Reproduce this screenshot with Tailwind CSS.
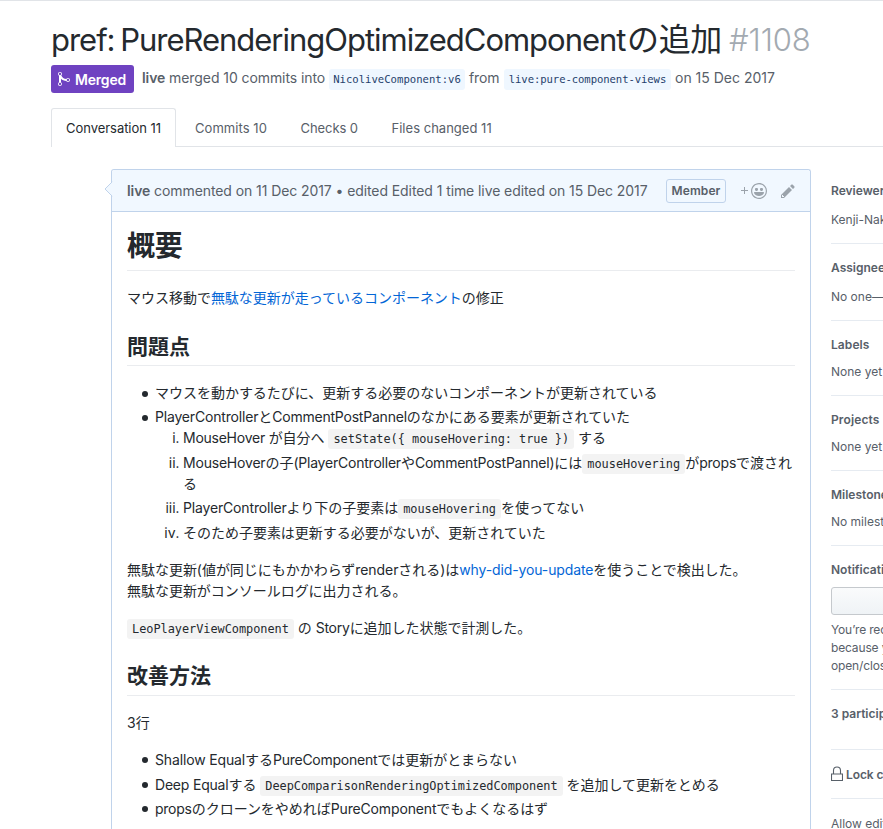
<!DOCTYPE html>
<html lang="ja">
<head>
<meta charset="utf-8">
<title>pref: PureRenderingOptimizedComponentの追加 #1108</title>
<script src="https://cdn.jsdelivr.net/npm/@tailwindcss/browser@4"></script>
</head>
<body class="bg-white font-['Inter','Noto_Sans_CJK_JP',sans-serif] text-[14px] leading-[21px] text-[#24292e]">
<div class="flex h-[829px] w-full flex-col overflow-hidden border-t border-[#e1e4e8]">
  <header class="shrink-0 pt-[20px] pl-[51px]">
    <h1 class="flex h-[36px] text-[32px] leading-[38px] whitespace-nowrap"><span class="w-[576px] text-[31px] tracking-[-1.02px] [word-spacing:-2px]">pref: PureRenderingOptimizedComponent</span><span class="w-[102px] tracking-[-0.34px]">の追加</span><span class="text-[31px] font-[350] tracking-[-0.1px] text-[#a3aab1]">#1108</span></h1>
    <div class="mt-[8px] flex h-[28px] items-center whitespace-nowrap text-[#586069]">
      <span class="flex h-[28px] w-[83px] items-center gap-[5px] rounded-[3px] bg-[#6f42c1] pl-[7px] font-semibold text-white">
        <svg class="h-[16px] w-[12px]" viewBox="0 0 12 16" fill="currentColor"><path d="M10 7c-.73 0-1.38.41-1.73 1.02V8C7.22 7.98 6 7.64 5.14 6.98c-.75-.58-1.5-1.61-1.89-2.44A1.993 1.993 0 0 0 2 .99C.89.99 0 1.89 0 3a2 2 0 0 0 1 1.72v6.56c-.59.35-1 .99-1 1.72 0 1.11.89 2 2 2a1.993 1.993 0 0 0 1-3.72V7.67c.67.7 1.44 1.27 2.3 1.69.86.42 2.03.63 2.97.64v-.02c.36.61 1 1.02 1.73 1.02 1.11 0 2-.89 2-2 0-1.11-.89-2-2-2zm-6.8 6c0 .66-.55 1.2-1.2 1.2-.65 0-1.2-.55-1.2-1.2 0-.65.55-1.2 1.2-1.2.65 0 1.2.55 1.2 1.2zM2 4.2C1.34 4.2.8 3.65.8 3c0-.65.55-1.2 1.2-1.2.65 0 1.2.55 1.2 1.2 0 .65-.55 1.2-1.2 1.2zm8 6c-.66 0-1.2-.55-1.2-1.2 0-.65.55-1.2 1.2-1.2.65 0 1.2.55 1.2 1.2 0 .65-.55 1.2-1.2 1.2z"/></svg>
        <span class="tracking-[-0.2px]">Merged</span>
      </span>
      <span class="ml-[8px] w-[187px] pb-[3px] tracking-[-0.08px]"><b class="font-semibold">live</b> merged 10 commits into</span>
      <code class="mt-px w-[136px] rounded-[3px] bg-[#eff7ff] text-center font-['DejaVu_Sans_Mono',monospace] text-[10.6px] text-[#1f3f6c]">NicoliveComponent:v6</code>
      <span class="ml-[4px] w-[35px] pb-[3px] tracking-[-0.1px]">from</span>
      <code class="mt-px w-[167px] rounded-[3px] bg-[#eff7ff] text-center font-['DejaVu_Sans_Mono',monospace] text-[10.6px] tracking-[-0.08px] text-[#1f3f6c]">live:pure-component-views</code>
      <span class="ml-[4px] pb-[3px]">on 15 Dec 2017</span>
    </div>
  </header>

  <nav class="mt-[15px] flex h-[39px] shrink-0 pl-[51px] text-[13px] whitespace-nowrap text-[#586069] shadow-[inset_0_-1px_0_#e1e4e8]">
    <div class="h-[39px] w-[125px] shrink-0 rounded-t-[3px] border border-b-0 border-[#e1e4e8] bg-white pt-[9px] pl-[14px] text-[#24292e]"><span class="tracking-[-0.04px]">Conversation 11</span></div>
    <div class="flex grow pt-[10px] pl-[19px]">
      <span class="w-[105.5px] tracking-[0.06px]">Commits 10</span>
      <span class="w-[91px] tracking-[-0.07px]">Checks 0</span>
      <span class="tracking-[0.02px]">Files changed 11</span>
    </div>
  </nav>

  <div class="relative mt-[22px] flex min-h-0 grow">
    <div class="absolute -top-[23px] left-0 h-px w-[51px] bg-white"></div>
    <article class="relative ml-[111px] w-[700px] shrink-0 rounded-t-[3px] border border-b-0 border-[#c0d3eb]">
      <div class="flex h-[42px] items-center rounded-t-[3px] border-b border-[#c0d3eb] bg-[#f1f8ff] pl-[15px] whitespace-nowrap text-[#586069]">
        <svg class="absolute top-[11px] -left-[8px] h-[16px] w-[9px]" viewBox="0 0 9 16"><path d="M9 .5L1 8l8 7.5z" fill="#f1f8ff"/><path d="M8.2.8L1 8l7.2 7.2" fill="none" stroke="#c0d3eb"/></svg>
        <span class="w-[539px] tracking-[-0.085px]"><b class="font-semibold">live</b> commented on 11 Dec 2017 • edited Edited 1 time live edited on 15 Dec 2017</span>
        <span class="flex h-[24px] w-[60px] items-center justify-center rounded-[3px] border border-[#c0d3eb] text-[12px] font-semibold tracking-[0.1px]">Member</span>
        <span class="ml-[15px] flex items-center gap-[2px] text-[#9ba3ab]">
          <svg class="h-[8px] w-[8px]" viewBox="0 0 8 8"><path d="M3.5 0v7M0 3.5h7" stroke="currentColor" fill="none"/></svg>
          <svg class="h-[16px] w-[16px]" viewBox="0 0 16 16" fill="currentColor"><path d="M8 0C3.58 0 0 3.58 0 8s3.58 8 8 8 8-3.58 8-8-3.58-8-8-8zm4.81 12.81a6.72 6.72 0 0 1-2.17 1.45c-.83.36-1.72.53-2.64.53-.92 0-1.81-.17-2.64-.53-.81-.34-1.55-.83-2.17-1.45a6.773 6.773 0 0 1-1.45-2.17A6.59 6.59 0 0 1 1.21 8c0-.92.17-1.81.53-2.64.34-.81.83-1.55 1.45-2.17.62-.62 1.36-1.11 2.17-1.45A6.59 6.59 0 0 1 8 1.21c.92 0 1.81.17 2.64.53.81.34 1.55.83 2.17 1.45.62.62 1.11 1.36 1.45 2.17.36.83.53 1.72.53 2.64 0 .92-.17 1.81-.53 2.64-.34.81-.83 1.55-1.45 2.17zM4 6.8v-.59c0-.66.53-1.19 1.2-1.19h.59c.66 0 1.19.53 1.19 1.19v.59c0 .67-.53 1.2-1.19 1.2H5.2C4.53 8 4 7.47 4 6.8zm5 0v-.59c0-.66.53-1.19 1.2-1.19h.59c.66 0 1.19.53 1.19 1.19v.59c0 .67-.53 1.2-1.19 1.2h-.59C9.53 8 9 7.47 9 6.8zm4 3.2c-.72 1.88-2.91 3-5 3s-4.28-1.13-5-3c-.14-.39.23-1 .66-1h8.59c.41 0 .89.61.75 1z"/></svg>
          <svg class="ml-[12px] h-[16px] w-[14px]" viewBox="0 0 14 16" fill="currentColor"><path d="M0 12v3h3l8-8-3-3L0 12zm3 2H1v-2h1v1h1v1zm10.3-9.3L12 6 9 3l1.3-1.3a.996.996 0 0 1 1.41 0l1.59 1.59c.39.39.39 1.02 0 1.41z"/></svg>
        </span>
      </div>
      <div class="p-[15px]">
        <h1 class="mb-[16px] border-b border-[#eaecef] pt-[2px] pb-[6.4px] text-[28px] leading-[35px] font-bold tracking-[-0.2px]">概要</h1>
        <p class="mb-[16px] tracking-[-0.02px]">マウス移動で<a class="text-[#0366d6]">無駄な更新が走っているコンポーネント</a>の修正</p>
        <h2 class="mt-[24px] mb-[16px] border-b border-[#eaecef] pt-[1.3px] pb-[5px] text-[21px] leading-[26.25px] font-bold">問題点</h2>
        <ul class="mb-[16px] pl-[28px] tracking-[-0.02px]">
          <li class="relative before:absolute before:top-[9px] before:-left-[13px] before:size-[6px] before:rounded-full before:bg-[#24292e]">マウスを動かするたびに、更新する必要のないコンポーネントが更新されている</li>
          <li class="relative mt-[3.5px] before:absolute before:top-[9px] before:-left-[13px] before:size-[6px] before:rounded-full before:bg-[#24292e]"><span class="tracking-[-0.18px]">PlayerController</span>と<span class="tracking-[-0.22px]">CommentPostPannel</span>のなかにある要素が更新されていた
            <ol class="list-[lower-roman] pl-[28px]">
              <li><span class="tracking-[-0.25px]">MouseHover </span>が自分へ <code class="rounded-[3px] bg-[#f3f3f3] px-[5px] py-[3px] font-['DejaVu_Sans_Mono',monospace] text-[11.9px] leading-0 tracking-[-0.02px]">setState({ mouseHovering: true })</code> する</li>
              <li class="mt-[3.5px]"><span class="tracking-[-0.2px]">MouseHover</span>の子<span class="tracking-[-0.22px]">(PlayerController</span>や<span class="tracking-[-0.22px]">CommentPostPannel)</span>には<code class="rounded-[3px] bg-[#f3f3f3] px-[5px] py-[3px] font-['DejaVu_Sans_Mono',monospace] text-[11.9px] leading-0">mouseHovering</code>が<span class="tracking-[-0.2px]">props</span>で渡される</li>
              <li class="mt-[3.5px]"><span class="tracking-[-0.16px]">PlayerController</span>より下の子要素は<code class="rounded-[3px] bg-[#f3f3f3] px-[5px] py-[3px] font-['DejaVu_Sans_Mono',monospace] text-[11.9px] leading-0">mouseHovering</code>を使ってない</li>
              <li class="mt-[3.5px]">そのため子要素は更新する必要がないが、更新されていた</li>
            </ol>
          </li>
        </ul>
        <p class="mb-[16px] tracking-[-0.03px]">無駄な更新(値が同じにもかかわらず<span class="tracking-[-0.08px]">render</span>される)は<a class="tracking-[-0.13px] text-[#0366d6]">why-did-you-update</a>を使うことで検出した。<br>無駄な更新がコンソールログに出力される。</p>
        <p class="mb-[16px] tracking-[-0.03px]"><code class="rounded-[3px] bg-[#f3f3f3] px-[5px] py-[3px] font-['DejaVu_Sans_Mono',monospace] text-[11.9px] leading-0">LeoPlayerViewComponent</code> の <span class="tracking-[-0.24px]">Story</span>に追加した状態で計測した。</p>
        <h2 class="mt-[24px] mb-[16px] border-b border-[#eaecef] pt-[1px] pb-[6px] text-[21px] leading-[26.25px] font-bold">改善方法</h2>
        <p class="mb-[16px]">3行</p>
        <ul class="pl-[28px] tracking-[-0.03px]">
          <li class="relative before:absolute before:top-[8px] before:-left-[13px] before:size-[6px] before:rounded-full before:bg-[#24292e]"><span class="tracking-[-0.15px]">Shallow Equal</span>する<span class="tracking-[-0.25px]">PureComponent</span>では更新がとまらない</li>
          <li class="relative mt-[3.5px] before:absolute before:top-[8px] before:-left-[13px] before:size-[6px] before:rounded-full before:bg-[#24292e]"><span class="tracking-[-0.2px]">Deep Equal</span>する <code class="rounded-[3px] bg-[#f3f3f3] px-[5px] py-[3px] font-['DejaVu_Sans_Mono',monospace] text-[11.9px] leading-0">DeepComparisonRenderingOptimizedComponent</code> を追加して更新をとめる</li>
          <li class="relative mt-[3.5px] before:absolute before:top-[8px] before:-left-[13px] before:size-[6px] before:rounded-full before:bg-[#24292e]"><span class="tracking-[-0.25px]">props</span>のクローンをやめれば<span class="tracking-[-0.15px]">PureComponent</span>でもよくなるはず</li>
        </ul>
      </div>
    </article>

    <aside class="ml-[20px] w-[220px] shrink-0 text-[12px] leading-[18px] whitespace-nowrap text-[#586069]">
      <section class="h-[75px] border-b border-[#e6ebf1] pt-[13px]"><h3 class="mb-[11px] font-semibold">Reviewers</h3><p>Kenji-Nak</p></section>
      <section class="h-[77px] border-b border-[#e6ebf1] pt-[15px]"><h3 class="mb-[11px] font-semibold">Assignees</h3><p>No one—assign yourself</p></section>
      <section class="h-[75px] border-b border-[#e6ebf1] pt-[15px]"><h3 class="mb-[9px] font-semibold tracking-[0.08px]">Labels</h3><p>None yet</p></section>
      <section class="h-[75px] border-b border-[#e6ebf1] pt-[15px]"><h3 class="mb-[9px] font-semibold tracking-[0.12px]">Projects</h3><p>None yet</p></section>
      <section class="h-[75px] border-b border-[#e6ebf1] pt-[15px]"><h3 class="mb-[9px] font-semibold">Milestone</h3><p>No milestone</p></section>
      <section class="h-[144px] border-b border-[#e6ebf1] pt-[15px]">
        <h3 class="mb-[8px] font-semibold">Notifications</h3>
        <div class="mb-[6px] h-[28px] rounded-[3px] border border-[#c5c9cd] bg-linear-to-b from-[#fafbfc] to-[#eff3f6]"></div>
        <p class="tracking-[-0.15px]">You’re receiving notifications<br>because you modified the<br>open/close state.</p>
      </section>
      <section class="h-[60px] border-b border-[#e6ebf1] pt-[15px]"><h3 class="font-semibold">3 participants</h3></section>
      <section class="flex h-[49px] items-center gap-[3px] border-b border-[#e6ebf1] pt-[2px] font-semibold">
        <svg class="mb-[3px] h-[16px] w-[12px]" viewBox="0 0 12 16" fill="none" stroke="currentColor"><path d="M.5 8h11v6.5H.5zM2.5 8V4.5a3.5 3.5 0 0 1 7 0V8" stroke-width="1.1"/></svg>
        <span class="tracking-[-0.1px]">Lock conversation</span>
      </section>
      <p class="pt-[16px]">Allow edits from maintainers.</p>
    </aside>
  </div>
</div>
</body>
</html>
